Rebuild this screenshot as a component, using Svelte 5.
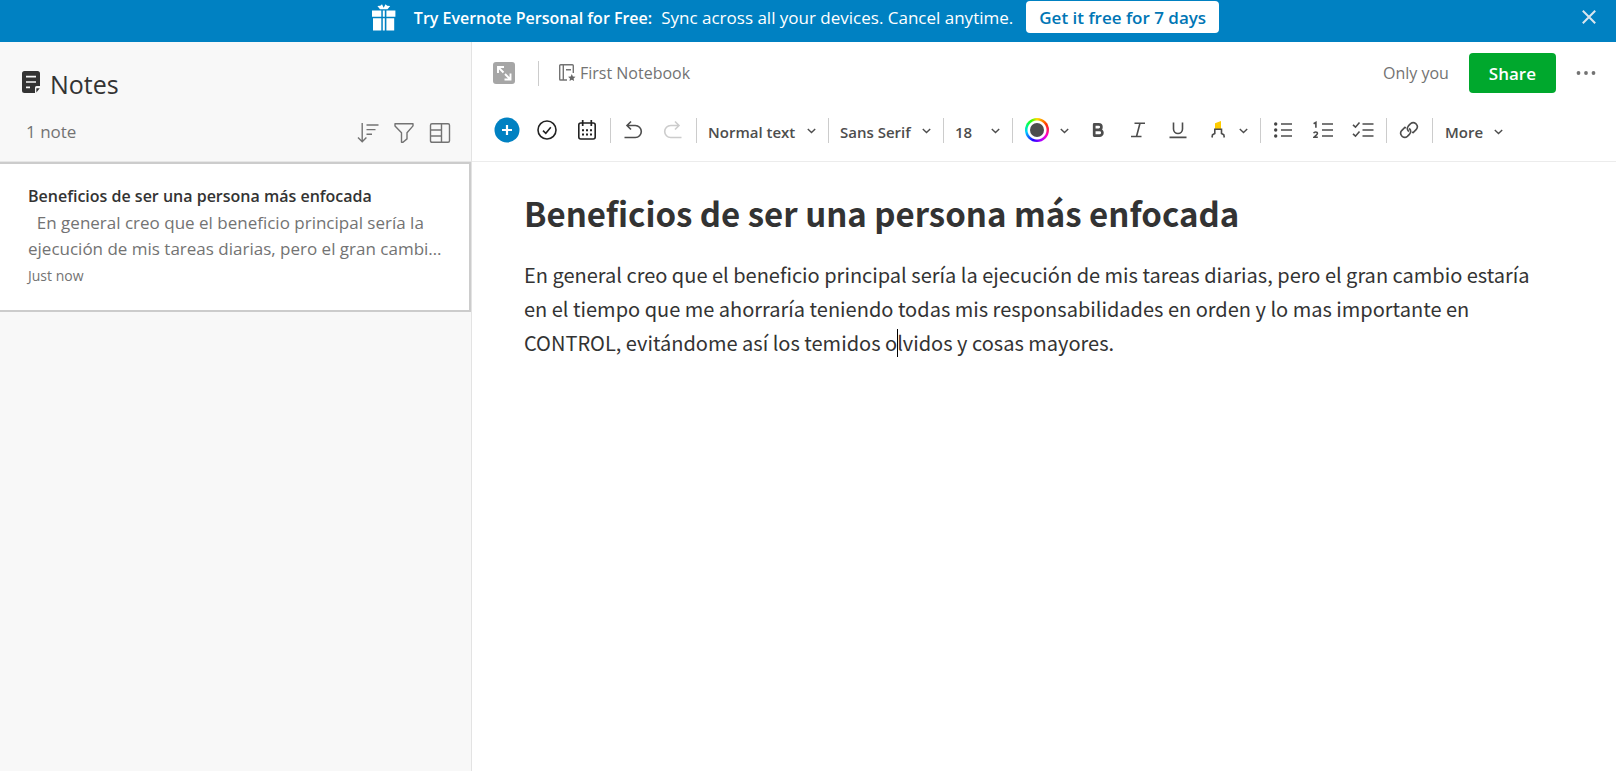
<script lang="ts">
  let notebook = 'First Notebook';
  let title = 'Beneficios de ser una persona más enfocada';
  let excerpt =
    '\u00a0 En general creo que el beneficio principal sería la ejecución de mis tareas diarias, pero el gran cambi…';
</script>

{#snippet caret()}
  <svg class="caret" width="9" height="6" viewBox="0 0 9 6" aria-hidden="true">
    <path d="M.8 1l3.7 3.6L8.2 1" fill="none" stroke="currentColor" stroke-width="1.4" />
  </svg>
{/snippet}

<div class="app">
  <aside class="banner">
    <div class="offer">
      <svg width="24" height="28" viewBox="0 0 24 28" fill="#fff" aria-hidden="true">
        <path d="M0 7.500h9.300v6.300H0zM10.800 7.500h2v6.300h-2zM14.400 7.500h9v6.300h-9zM1 15.300h8.300V27.500H1zM10.800 15.300h2V27.500h-2zM14.400 15.300h7.800V27.500h-7.800z" />
        <path d="M11.700 4.800L10 1.200 8.300 2.800 5.400 3.100 8 6.300h7.500l2.700-3.200-3-.3-1.700-1.600z" />
      </svg>
      <p><strong>Try Evernote Personal for Free:</strong><span>Sync across all your devices. Cancel anytime.</span></p>
      <button class="trial">Get it free for 7 days</button>
    </div>
    <button class="close" aria-label="Close">
      <svg width="14" height="14" viewBox="0 0 14 14"><path d="M.8.8l12.400 12.400M13.200.8L.8 13.200" stroke="currentColor" stroke-width="2" /></svg>
    </button>
  </aside>

  <div class="columns">
    <section class="sidebar">
      <header>
        <h2>
          <svg width="18" height="22" viewBox="0 0 18 22" aria-hidden="true">
            <path d="M2.500 0h13A2.500 2.500 0 0 1 18 2.500V15h-3.500a1.500 1.500 0 0 0-1.500 1.500V22H2.500A2.500 2.500 0 0 1 0 19.500v-17A2.500 2.500 0 0 1 2.500 0z" fill="#333" />
            <path d="M4 5.700h10M4 11h10M4 16.300h4" stroke="#f8f8f8" stroke-width="1.700" />
            <path d="M14.300 21.500v-4.300h3.500z" fill="#333" />
          </svg>
          Notes
        </h2>
        <div class="summary">
          <span>1 note</span>
          <button aria-label="Sort">
            <svg width="22" height="22" viewBox="0 0 22 22"><path d="M5.200 1v18.500M1 15.500l4.200 4.300 4.200-4.300M9.500 3h12M9.500 7.600h9M9.500 12.300h5.500" /></svg>
          </button>
          <button aria-label="Filter">
            <svg width="22" height="22" viewBox="0 0 22 22"><path d="M2 1.700h18v2.200l-6 6.800v6.200l-4 3.400h-1.500v-9.600L2 3.900z" stroke-linejoin="round" /></svg>
          </button>
          <button aria-label="View options">
            <svg width="22" height="22" viewBox="0 0 22 22"><path d="M3 1.700h16q1.500 0 1.500 1.500v15.600q0 1.500-1.500 1.500H3q-1.500 0-1.500-1.500V3.200Q1.500 1.700 3 1.700zM12.500 1.700v18.600M1.500 8h11M1.500 14h11" /></svg>
          </button>
        </div>
      </header>
      <article class="card">
        <h3>{title}</h3>
        <p>{excerpt}</p>
        <time>Just now</time>
      </article>
    </section>

    <main class="editor">
      <header class="note-header">
        <button class="expand" aria-label="Expand note">
          <svg width="22" height="22" viewBox="0 0 22 22">
            <rect width="22" height="22" rx="3" fill="#a6a6a6" />
            <path d="M5 11V5h6M5 5l5.500 5.500M17.500 11.500v6h-6M17.500 17.500L12 12" fill="none" stroke="#fff" stroke-width="1.900" />
          </svg>
        </button>
        <i class="sep"></i>
        <button class="notebook">
          <svg width="17" height="18" viewBox="0 0 17 18" aria-hidden="true">
            <path d="M8 16H1.500q-.8 0-.8-.8V1.700q0-1 1-1h11.600q1 0 1 1V9M4.300.8V16M7 5.800h5" fill="none" stroke="#737373" stroke-width="1.400" />
            <path d="M12.800 10l1.100 2.400 2.600.3-1.900 1.800.5 2.600-2.300-1.300-2.300 1.300.5-2.600-1.900-1.800 2.600-.3z" fill="#666" />
          </svg>
          {notebook}
        </button>
        <span class="access">Only you</span>
        <button class="share">Share</button>
        <button class="dots" aria-label="More actions">
          <svg width="20" height="4" viewBox="0 0 20 4" fill="#737373"><circle cx="2.500" cy="2" r="1.900" /><circle cx="10" cy="2" r="1.900" /><circle cx="17.500" cy="2" r="1.900" /></svg>
        </button>
      </header>

      <div class="toolbar" role="toolbar" aria-label="Formatting">
        <button class="tool" aria-label="Insert">
          <svg width="26" height="26" viewBox="0 0 26 26"><circle cx="13" cy="13" r="12.500" fill="#0081c2" stroke="none" /><path d="M13 8v10M8 13h10" stroke="#fff" stroke-width="2.200" /></svg>
        </button>
        <button class="tool dark" aria-label="Task">
          <svg width="20" height="20" viewBox="0 0 20 20"><circle cx="10" cy="10" r="9" /><path d="M6 10.600l2.800 2.700 5-6" /></svg>
        </button>
        <button class="tool dark" aria-label="Calendar event">
          <svg width="18" height="20" viewBox="0 0 18 20"><rect x=".8" y="3" width="16.400" height="16" rx="2" /><path d="M4.700 0v6M13.300 0v6" stroke-width="1.700" /><path d="M4 10.300h2M8 10.300h2M12 10.300h2M4 14.500h2M8 14.500h2M12 14.500h2" stroke-width="2" /></svg>
        </button>
        <i class="sep"></i>
        <button class="tool" aria-label="Undo">
          <svg width="20" height="20" viewBox="0 0 20 20"><path d="M1.500 17.500h10.800a6 6 0 0 0 0-12H4.200M8 1.500l-4 4 4 4" /></svg>
        </button>
        <button class="tool" aria-label="Redo" disabled>
          <svg width="20" height="20" viewBox="0 0 20 20"><path d="M18.500 17.500H7.700a6 6 0 0 1 0-12h8.100M12 1.500l4 4-4 4" /></svg>
        </button>
        <i class="sep"></i>
        <label class="pick style"><select aria-label="Text style"><option>Normal text</option></select>{@render caret()}</label>
        <i class="sep"></i>
        <label class="pick family"><select aria-label="Font family"><option>Sans Serif</option></select>{@render caret()}</label>
        <i class="sep"></i>
        <label class="pick size"><select aria-label="Font size"><option>18</option></select>{@render caret()}</label>
        <i class="sep"></i>
        <button class="split" aria-label="Text color"><span class="wheel"><span></span></span>{@render caret()}</button>
        <button class="tool" aria-label="Bold">
          <svg width="20" height="20" viewBox="0 0 20 20"><path d="M6.200 4.400h4.500a2.700 2.700 0 0 1 0 5.400H6.200zM6.200 9.800h5.300a2.900 2.900 0 0 1 0 5.800H6.200z" stroke-width="2.700" stroke-linejoin="round" /></svg>
        </button>
        <button class="tool" aria-label="Italic">
          <svg width="20" height="20" viewBox="0 0 20 20"><path d="M6.500 3.300h10.500M12 3.300L8.500 16.500M3 16.500h10.500" /></svg>
        </button>
        <button class="tool" aria-label="Underline">
          <svg width="20" height="20" viewBox="0 0 20 20"><path d="M5.500 2.500v6.500a4.500 4.500 0 0 0 9 0V2.500M1.500 17.400h17" /></svg>
        </button>
        <button class="split mark" aria-label="Highlight">
          <svg width="20" height="20" viewBox="0 0 20 20"><path d="M7 3.300L13 1v8H7z" fill="#fc0" stroke="none" /><path d="M4 17.500l.5-2.700 2.300-1.300V9.300h6.700v4.200l2.300 1.300.5 2.700" /></svg>{@render caret()}
        </button>
        <i class="sep"></i>
        <button class="tool" aria-label="Bulleted list">
          <svg width="20" height="20" viewBox="0 0 20 20"><path d="M8 4h11M8 10h11M8 16h11" /><g fill="#444" stroke="none"><circle cx="2.700" cy="4" r="1.700" /><circle cx="2.700" cy="10" r="1.700" /><circle cx="2.700" cy="16" r="1.700" /></g></svg>
        </button>
        <button class="tool" aria-label="Numbered list">
          <svg width="20" height="20" viewBox="0 0 20 20"><path d="M9 4h11M9 10h11M9 16h11M.6 3.700l2.300-1.400v5.500M.7 13.200q.5-1.200 1.800-1.200 2 0 1.900 1.600 0 1-3.600 3.700h4" /></svg>
        </button>
        <button class="tool" aria-label="Checklist">
          <svg width="22" height="20" viewBox="0 0 22 20"><path d="M10.500 4H21.500M10.500 10H21.500M10.500 16H21.500M1 4.800l2.500 2.400 4-4.700M1 13.800l2.500 2.400 4-4.700" /></svg>
        </button>
        <i class="sep"></i>
        <button class="tool" aria-label="Link">
          <svg width="20" height="20" viewBox="0 0 20 20"><path d="M7 7.800L5.800 7.500 2.700 10.600a4 4 0 0 0 0 5.200l.5.500a4 4 0 0 0 5.200 0l2.200-2.200q2.400-3-.4-5.700M13 12.200l1.200.3 3.100-3.100a4 4 0 0 0 0-5.200l-.5-.5a4 4 0 0 0-5.200 0L9.400 5.900q-2.400 3 .4 5.700" /></svg>
        </button>
        <i class="sep"></i>
        <button class="more">More {@render caret()}</button>
      </div>

      <div class="content">
        <h1>{title}</h1>
        <p>
          En general creo que el beneficio principal sería la ejecución de mis tareas diarias, pero el gran cambio estaría
          en el tiempo que me ahorraría teniendo todas mis responsabilidades en orden y lo mas importante en CONTROL,
          evitándome así los temidos o<span class="cursor"></span>lvidos y cosas mayores.
        </p>
      </div>
    </main>
  </div>
</div>

<style>
  :global(body) { margin: 0; }
  .app {
    display: flex;
    flex-direction: column;
    min-height: 100vh;
    font-family: "Open Sans", "Noto Sans", sans-serif;
    font-size: 16px;
    color: #333;
    background: #fff;
  }
  h1, h2, h3, p { margin: 0; }
  button, select { font: inherit; color: inherit; background: none; border: 0; padding: 0; }
  button { display: flex; align-items: center; justify-content: center; cursor: pointer; }
  svg { display: block; flex: none; }

  .banner { display: flex; align-items: flex-start; box-sizing: border-box; height: 42px; padding: 1px 20px 0 9px; background: #0081c2; color: #fff; }
  .offer { display: flex; flex: 1; align-items: center; justify-content: center; height: 32px; font-size: 17px; white-space: nowrap; }
  .offer p { margin: 0 13px 0 18px; }
  .offer strong { margin-right: 9px; font-size: 16px; font-weight: 600; }
  .trial { height: 32px; padding: 0 13px; border-radius: 4px; background: #fff; color: #0076b5; font-weight: 600; }
  .close { height: 32px; color: #d9e6ee; }

  .columns { display: flex; flex: 1; }
  .sidebar { flex: none; box-sizing: border-box; width: 472px; border-right: 1px solid #e3e3e3; background: #f8f8f8; }
  .sidebar header { padding: 22px 20px 0 22px; border-bottom: 1px solid #e6e6e6; }
  h2 { display: flex; align-items: center; gap: 10px; height: 40px; font-size: 25px; font-weight: 400; line-height: 40px; }
  h2 svg { margin-bottom: 4px; }
  .summary { display: flex; align-items: center; gap: 14px; height: 57px; padding-left: 4px; color: #737373; }
  .summary span { flex: 1; padding-bottom: 2px; font-size: 17px; }
  .summary svg { fill: none; stroke: #737373; stroke-width: 1.4; }
  .card { padding: 19px 26px 20px 28px; border: 2px solid #ccc; border-left: 0; background: #fff; }
  .card h3 { font-size: 16px; font-weight: 600; line-height: 27px; white-space: nowrap; }
  .card p { font-size: 17px; line-height: 26px; color: #737373; }
  .card time { display: block; font-size: 14px; line-height: 28px; color: #737373; }

  .editor { flex: 1; min-width: 0; }
  .note-header { display: flex; align-items: center; height: 62px; padding: 0 20px 0 21px; color: #737373; }
  .sep { flex: none; width: 1px; height: 25px; margin: 0 2px 0 3px; background: #ccc; }
  .note-header .sep { margin: 0 20px 0 23px; }
  .notebook { gap: 4px; }
  .access { margin-left: auto; }
  .share { height: 40px; margin: 0 20px; padding: 0 20px; border-radius: 4px; background: #00a82d; color: #fff; font-size: 17px; font-weight: 600; }

  .toolbar { display: flex; align-items: center; height: 52px; padding: 0 15px 5px; border-bottom: 1px solid #ececec; color: #4d4d4d; font-size: 15px; font-weight: 600; }
  .toolbar svg { fill: none; stroke: #4d4d4d; stroke-width: 1.6; }
  .tool { width: 40px; height: 40px; }
  .toolbar .dark svg { stroke: #222; }
  .toolbar .tool:disabled svg { stroke: #ccc; }
  .pick { display: grid; grid-template-columns: 1fr 9px; align-items: center; height: 40px; }
  .pick select { grid-area: 1 / 1 / 2 / 3; appearance: none; padding: 4px 0 0 9px; height: 40px; }
  .pick .caret { grid-area: 1 / 2; margin: 2px 0 0 -9px; pointer-events: none; }
  .style { width: 126px; }
  .family { width: 109px; }
  .size { width: 63px; }
  .split { gap: 11px; width: 63px; height: 40px; }
  .split .caret { margin-top: 2px; }
  .mark { width: 59px; }
  .wheel {
    display: grid;
    place-items: center;
    width: 24px;
    height: 24px;
    border-radius: 50%;
    background: radial-gradient(circle, #fff 9px, transparent 10px), conic-gradient(#fd0, #f30 60deg, #f0c 120deg, #a0f 160deg, #20f 200deg, #0cf 260deg, #0f6 300deg, #3f0 330deg, #fd0);
  }
  .wheel span { width: 14px; height: 14px; border-radius: 50%; background: #4d4d4d; }
  .more { gap: 11px; height: 40px; padding: 4px 10px 0; }

  .content { padding: 25px 60px 40px 52px; font-family: "Noto Sans CJK SC", sans-serif; }
  h1 { font-size: 33px; font-weight: 700; line-height: 52px; }
  .content p { margin-top: 19px; font-size: 20px; line-height: 34px; }
  .cursor { position: relative; }
  .cursor::after { content: ""; position: absolute; top: 1px; left: 0; width: 1px; height: 28px; background: #000; }
</style>
